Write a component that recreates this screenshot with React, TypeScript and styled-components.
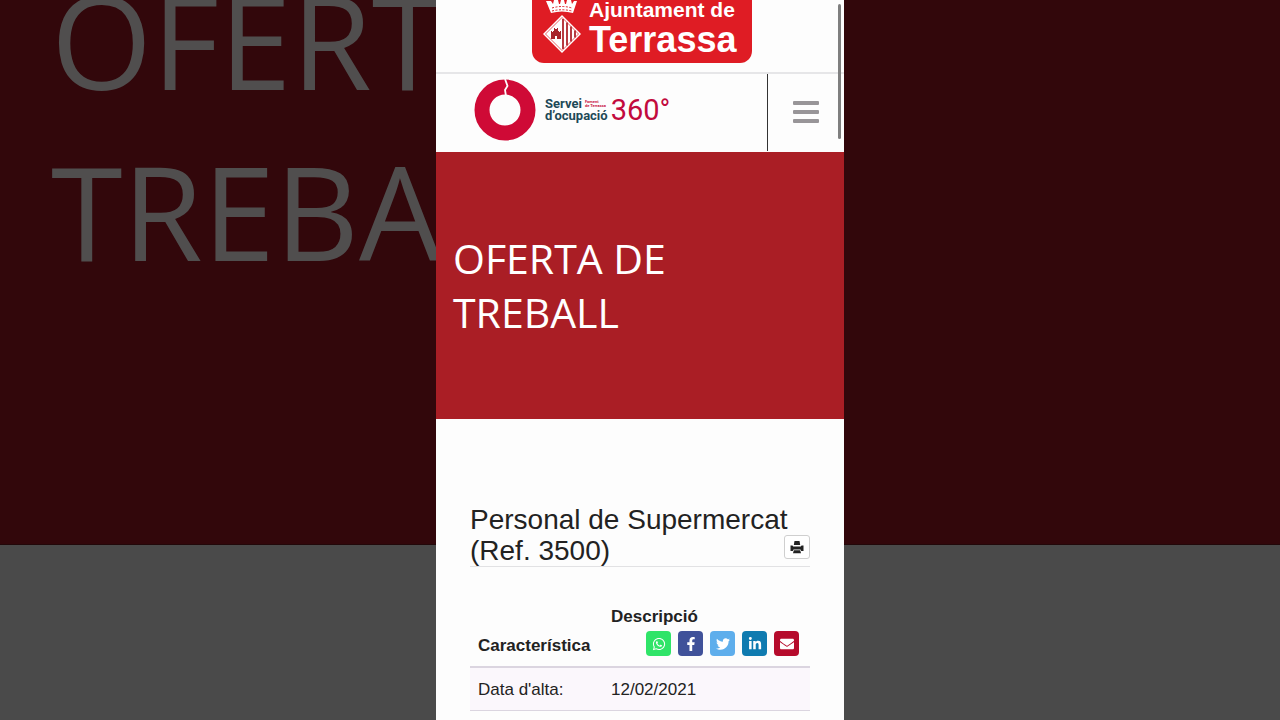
import React from "react";
import styled, { createGlobalStyle } from "styled-components";
import {
  FaWhatsapp,
  FaFacebookF,
  FaTwitter,
  FaLinkedinIn,
  FaEnvelope,
} from "react-icons/fa";

const sans = `"Liberation Sans", Arial, sans-serif`;
const display = `"Open Sans", "Noto Sans", sans-serif`;

const GlobalStyle = createGlobalStyle`
  *, *::before, *::after { box-sizing: border-box; }
  body { margin: 0; background: #4a4a4a; font-family: ${sans}; color: #222; }
`;

const Stage = styled.div`
  display: grid;
  grid-template-columns: minmax(0, 1fr);
  height: 100vh;
  overflow: hidden;
`;

const Backdrop = styled.div`
  grid-area: 1 / 1;
  background: #4a4a4a;
`;

const BackdropBand = styled.div`
  display: flex;
  flex-direction: column;
  justify-content: flex-end;
  height: 545px;
  padding: 0 0 248px 51px;
  overflow: hidden;
  background: #32070b;
  border-bottom: 1px solid #22080a;
`;

const BackdropText = styled.div`
  font: 400 130px/171px ${display};
  color: #504e4e;
  white-space: nowrap;
`;

const Phone = styled.main`
  grid-area: 1 / 1;
  position: relative;
  justify-self: center;
  width: 100%;
  max-width: 408px;
  overflow: hidden;
  background: #fdfdfd;
`;

const ScrollThumb = styled.div`
  position: absolute;
  top: 4px;
  right: 3px;
  width: 3px;
  height: 135px;
  border-radius: 2px;
  background: #7f7f7f;
`;

const TopBar = styled.div`
  display: flex;
  justify-content: center;
  padding: 0 0 9px 4px;
  border-bottom: 2px solid #e6e6e8;
`;

const CityLogo = styled.a`
  display: flex;
  gap: 8px;
  width: 220px;
  height: 63px;
  padding-left: 11px;
  border-radius: 0 0 12px 12px;
  background: #df1c24;
  color: #fff;
  text-decoration: none;
`;

const CityName = styled.span`
  display: flex;
  flex-direction: column;
  font-weight: 700;
  white-space: nowrap;
`;

const CityLine = styled.span<{ $large?: boolean }>`
  font-size: ${(p) => (p.$large ? 36 : 21)}px;
  line-height: ${(p) => (p.$large ? 42 : 19)}px;
`;

const NavBar = styled.header`
  display: flex;
  justify-content: space-between;
  height: 78px;
  padding-bottom: 1px;
`;

const ServiceLogo = styled.a`
  display: flex;
  align-items: flex-start;
  padding: 5px 0 0 38px;
  font-family: Roboto, ${sans};
  color: #1d4957;
  text-decoration: none;
`;

const ServiceName = styled.span`
  display: flex;
  flex-direction: column;
  margin: 19px 3px 0 9px;
  font-size: 13px;
  line-height: 12px;
  font-weight: 700;
`;

const ServiceRow = styled.span`
  display: flex;
  align-items: center;
  gap: 3px;
`;

const Tagline = styled.small`
  font-size: 4px;
  line-height: 4px;
  font-weight: 700;
  color: #c8103e;
  white-space: nowrap;
`;

const Degrees = styled.span`
  margin-top: 15px;
  font-size: 29px;
  line-height: 32px;
  font-weight: 400;
  color: #c20a3e;
`;

const MenuButton = styled.button`
  display: flex;
  flex-direction: column;
  align-items: flex-start;
  gap: 5px;
  width: 77px;
  padding: 27px 0 0 25px;
  border: 0;
  border-left: 1px solid #333;
  background: none;
`;

const MenuBar = styled.span`
  width: 26px;
  height: 4px;
  border-radius: 1px;
  background: #989598;
`;

const Hero = styled.section`
  padding: 79px 17px 80px;
  background: #aa1e25;
`;

const HeroTitle = styled.h1`
  max-width: 260px;
  margin: 0;
  font: 400 41px/54px ${display};
  color: #fff;
`;

const Content = styled.section`
  padding: 85px 34px 0;
`;

const OfferHeader = styled.div`
  position: relative;
  border-bottom: 1px solid #e2e2e4;
`;

const OfferTitle = styled.h2`
  margin: 0;
  font-size: 28px;
  line-height: 31px;
  font-weight: 400;
`;

const PrintButton = styled.button`
  position: absolute;
  right: 0;
  bottom: 7px;
  display: flex;
  align-items: center;
  justify-content: center;
  width: 26px;
  height: 24px;
  padding: 0;
  border: 1px solid #cfcfcf;
  border-radius: 3px;
  background: #fff;
  color: #222;
`;

const Details = styled.table`
  width: 100%;
  margin-top: 30px;
  border-collapse: separate;
  border-spacing: 0;
  table-layout: fixed;
  font-size: 17px;
  line-height: 24px;
`;

const HeadCell = styled.th<{ $width?: number }>`
  width: ${(p) => (p.$width ? `${p.$width}px` : "auto")};
  padding: 8px;
  border-bottom: 2px solid #dbd5e0;
  text-align: left;
  vertical-align: bottom;
`;

const Cell = styled.td`
  padding: 10px 8px 8px;
  border-bottom: 1px solid #dbd5e0;
  background: #fbf7fc;
`;

const ShareList = styled.div`
  display: flex;
  justify-content: flex-end;
  gap: 7px;
  padding: 2px 3px;
`;

const ShareLink = styled.a<{ $color: string }>`
  display: flex;
  align-items: center;
  justify-content: center;
  width: 25px;
  height: 25px;
  border-radius: 4px;
  background: ${(p) => p.$color};
  color: #fff;
  font-size: 14px;
`;

const shares = [
  { label: "WhatsApp", color: "#2fe468", Icon: FaWhatsapp },
  { label: "Facebook", color: "#40529a", Icon: FaFacebookF },
  { label: "Twitter", color: "#5eaeec", Icon: FaTwitter },
  { label: "LinkedIn", color: "#0f7bb0", Icon: FaLinkedinIn },
  { label: "Correu", color: "#b60b2c", Icon: FaEnvelope },
];

function CityCrest() {
  return (
    <svg width="38" height="54" viewBox="0 0 38 54" aria-hidden="true">
      <path
        d="M3 1h5l2 3 1-4h4l1 4h1l1-4h3l1 4h1l1-4h4l1 4 2-3h3L30 13Q19 10 8 13Z"
        fill="#fff"
      />
      <path d="M9 8Q19 5 29 8M9 11Q19 8.500 29 11" stroke="#df1c24" strokeDasharray="2 1.500" fill="none" />
      <path d="M19 15 L38 34 L19 53 L0 34 Z" fill="#fff" />
      <path d="M19 17.500 L2.500 34 L19 50.500 L35.500 34 Z" fill="none" stroke="#df1c24" strokeWidth="0.700" />
      <path
        d="M8 39v-8h1v1h1v-1h1v-3h1v1h2v-1h1v3h1v1h1v-1h1v8h-4v-3h-2v3z"
        fill="#a8252c"
      />
      <path
        d="M20 19v30M24 22.500v23M28 26.500v15M32 30.500v7"
        stroke="#b0262d"
        strokeWidth="1.800"
      />
    </svg>
  );
}

function RingMark() {
  return (
    <svg width="62" height="62" viewBox="0 0 62 62" aria-hidden="true">
      <circle cx="31" cy="31" r="23" fill="none" stroke="#cf0a36" strokeWidth="15" />
      <path d="M31 0 L33.500 7 L31 11 L32 17" fill="none" stroke="#fdfdfd" strokeWidth="1.800" />
    </svg>
  );
}

function PrinterIcon() {
  return (
    <svg width="14" height="14" viewBox="0 0 14 14" fill="currentColor" aria-hidden="true">
      <path d="M4.500 1h5l.7 4H3.800z" />
      <path d="M.5 5.500h2L3.200 6.500h7.600l.7-1h2V11h-2.300l-.7-1.500h-7L2.800 11H.5z" />
      <path d="M3.800 10.300h6.400l.8 2.900H3z" />
    </svg>
  );
}

export default function App() {
  return (
    <>
      <GlobalStyle />
      <Stage>
        <Backdrop aria-hidden="true">
          <BackdropBand>
            <BackdropText>OFERTA</BackdropText>
            <BackdropText>TREBALL</BackdropText>
          </BackdropBand>
        </Backdrop>
        <Phone>
          <TopBar>
            <CityLogo href="#">
              <CityCrest />
              <CityName>
                <CityLine>Ajuntament de</CityLine>
                <CityLine $large>Terrassa</CityLine>
              </CityName>
            </CityLogo>
          </TopBar>
          <NavBar>
            <ServiceLogo href="#">
              <RingMark />
              <ServiceName>
                <ServiceRow>
                  Servei
                  <Tagline>
                    Foment
                    <br />
                    de Terrassa
                  </Tagline>
                </ServiceRow>
                <ServiceRow>d’ocupació</ServiceRow>
              </ServiceName>
              <Degrees>360°</Degrees>
            </ServiceLogo>
            <MenuButton aria-label="Menú">
              <MenuBar />
              <MenuBar />
              <MenuBar />
            </MenuButton>
          </NavBar>
          <Hero>
            <HeroTitle>OFERTA DE TREBALL</HeroTitle>
          </Hero>
          <Content>
            <OfferHeader>
              <OfferTitle>Personal de Supermercat (Ref. 3500)</OfferTitle>
              <PrintButton aria-label="Imprimeix">
                <PrinterIcon />
              </PrintButton>
            </OfferHeader>
            <Details>
              <thead>
                <tr>
                  <HeadCell $width={133}>Característica</HeadCell>
                  <HeadCell>
                    Descripció
                    <ShareList>
                      {shares.map(({ label, color, Icon }) => (
                        <ShareLink key={label} href="#" aria-label={label} $color={color}>
                          <Icon />
                        </ShareLink>
                      ))}
                    </ShareList>
                  </HeadCell>
                </tr>
              </thead>
              <tbody>
                <tr>
                  <Cell>Data d'alta:</Cell>
                  <Cell>12/02/2021</Cell>
                </tr>
              </tbody>
            </Details>
          </Content>
          <ScrollThumb />
        </Phone>
      </Stage>
    </>
  );
}
